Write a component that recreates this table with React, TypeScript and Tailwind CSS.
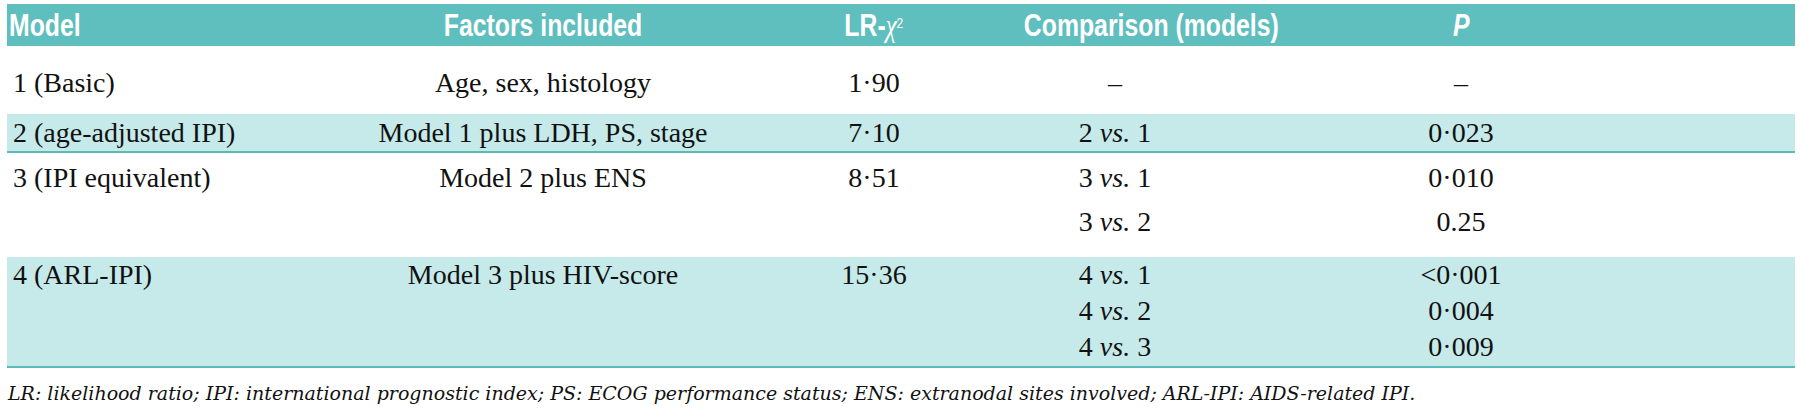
type Row = {
  model: string;
  factors: string;
  lr: string;
  comps: [string, string][];
  shaded: boolean;
  box: string;
};

const rows: Row[] = [
  {
    model: '1 (Basic)',
    factors: 'Age, sex, histology',
    lr: '1·90',
    comps: [['–', '–']],
    shaded: false,
    box: 'h-[68px] pt-[17px] leading-[40px]',
  },
  {
    model: '2 (age-adjusted IPI)',
    factors: 'Model 1 plus LDH, PS, stage',
    lr: '7·10',
    comps: [['2|1', '0·023']],
    shaded: true,
    box: 'h-[39px] leading-[37px] border-b-2 border-[#5ab9b9]',
  },
  {
    model: '3 (IPI equivalent)',
    factors: 'Model 2 plus ENS',
    lr: '8·51',
    comps: [
      ['3|1', '0·010'],
      ['3|2', '0.25'],
    ],
    shaded: false,
    box: 'h-[104px] pt-[3px] leading-[44px]',
  },
  {
    model: '4 (ARL-IPI)',
    factors: 'Model 3 plus HIV-score',
    lr: '15·36',
    comps: [
      ['4|1', '<0·001'],
      ['4|2', '0·004'],
      ['4|3', '0·009'],
    ],
    shaded: true,
    box: 'h-[111px] leading-[36px] border-b-2 border-[#5ab9b9]',
  },
];

function Versus({ value }: { value: string }) {
  if (!value.includes('|')) return <>{value}</>;
  const [a, b] = value.split('|');
  return (
    <>
      {a} <i>vs.</i> {b}
    </>
  );
}

export default function App() {
  return (
    <main className="min-h-screen bg-white">
      <div className="ml-[7px] w-[1788px] pt-[4px] text-[#111] [font-family:'Liberation_Serif',serif] text-[28px]">
        {/* header band, narrow bold sans */}
        <div className="grid h-[42px] grid-cols-[323px_426px_236px_246px_446px_1fr] items-center bg-[#5fbebe] text-white [font-family:'Liberation_Sans',Arial,sans-serif] text-[31px] font-bold leading-none">
          <span className="pl-[2px]">
            <span className="inline-block origin-left scale-x-[0.8] whitespace-nowrap">Model</span>
          </span>
          <span className="text-center">
            <span className="inline-block scale-x-[0.8] whitespace-nowrap">Factors included</span>
          </span>
          <span className="text-center">
            <span className="inline-block scale-x-[0.8] whitespace-nowrap">
              LR-
              <span className="[font-family:'Liberation_Serif',serif] font-normal italic">χ</span>
              <sup className="text-[15px] font-normal">2</sup>
            </span>
          </span>
          <span className="text-center">
            <span className="inline-block scale-x-[0.8] whitespace-nowrap">Comparison (models)</span>
          </span>
          <span className="text-center">
            <span className="inline-block scale-x-[0.8] italic">P</span>
          </span>
          <span />
        </div>

        {rows.map((r) => (
          <div
            key={r.model}
            className={`grid grid-cols-[323px_426px_236px_246px_446px_1fr] items-start ${r.box} ${
              r.shaded ? 'bg-[#c6eaea]' : 'bg-white'
            }`}
          >
            <span className="pl-[6px]">{r.model}</span>
            <span className="text-center">{r.factors}</span>
            <span className="text-center">{r.lr}</span>
            <div className="flex flex-col text-center">
              {r.comps.map((c) => (
                <span key={c[0]}>
                  <Versus value={c[0]} />
                </span>
              ))}
            </div>
            <div className="flex flex-col text-center">
              {r.comps.map((c) => (
                <span key={c[0]}>{c[1]}</span>
              ))}
            </div>
            <span />
          </div>
        ))}

        <p className="pt-[12px] pl-[1px] [font-family:'DejaVu_Serif',serif] text-[19px] italic leading-[26px] whitespace-nowrap">
          LR: likelihood ratio; IPI: international prognostic index; PS: ECOG performance status; ENS: extranodal sites
          involved; ARL-IPI: AIDS-related IPI.
        </p>
      </div>
    </main>
  );
}
